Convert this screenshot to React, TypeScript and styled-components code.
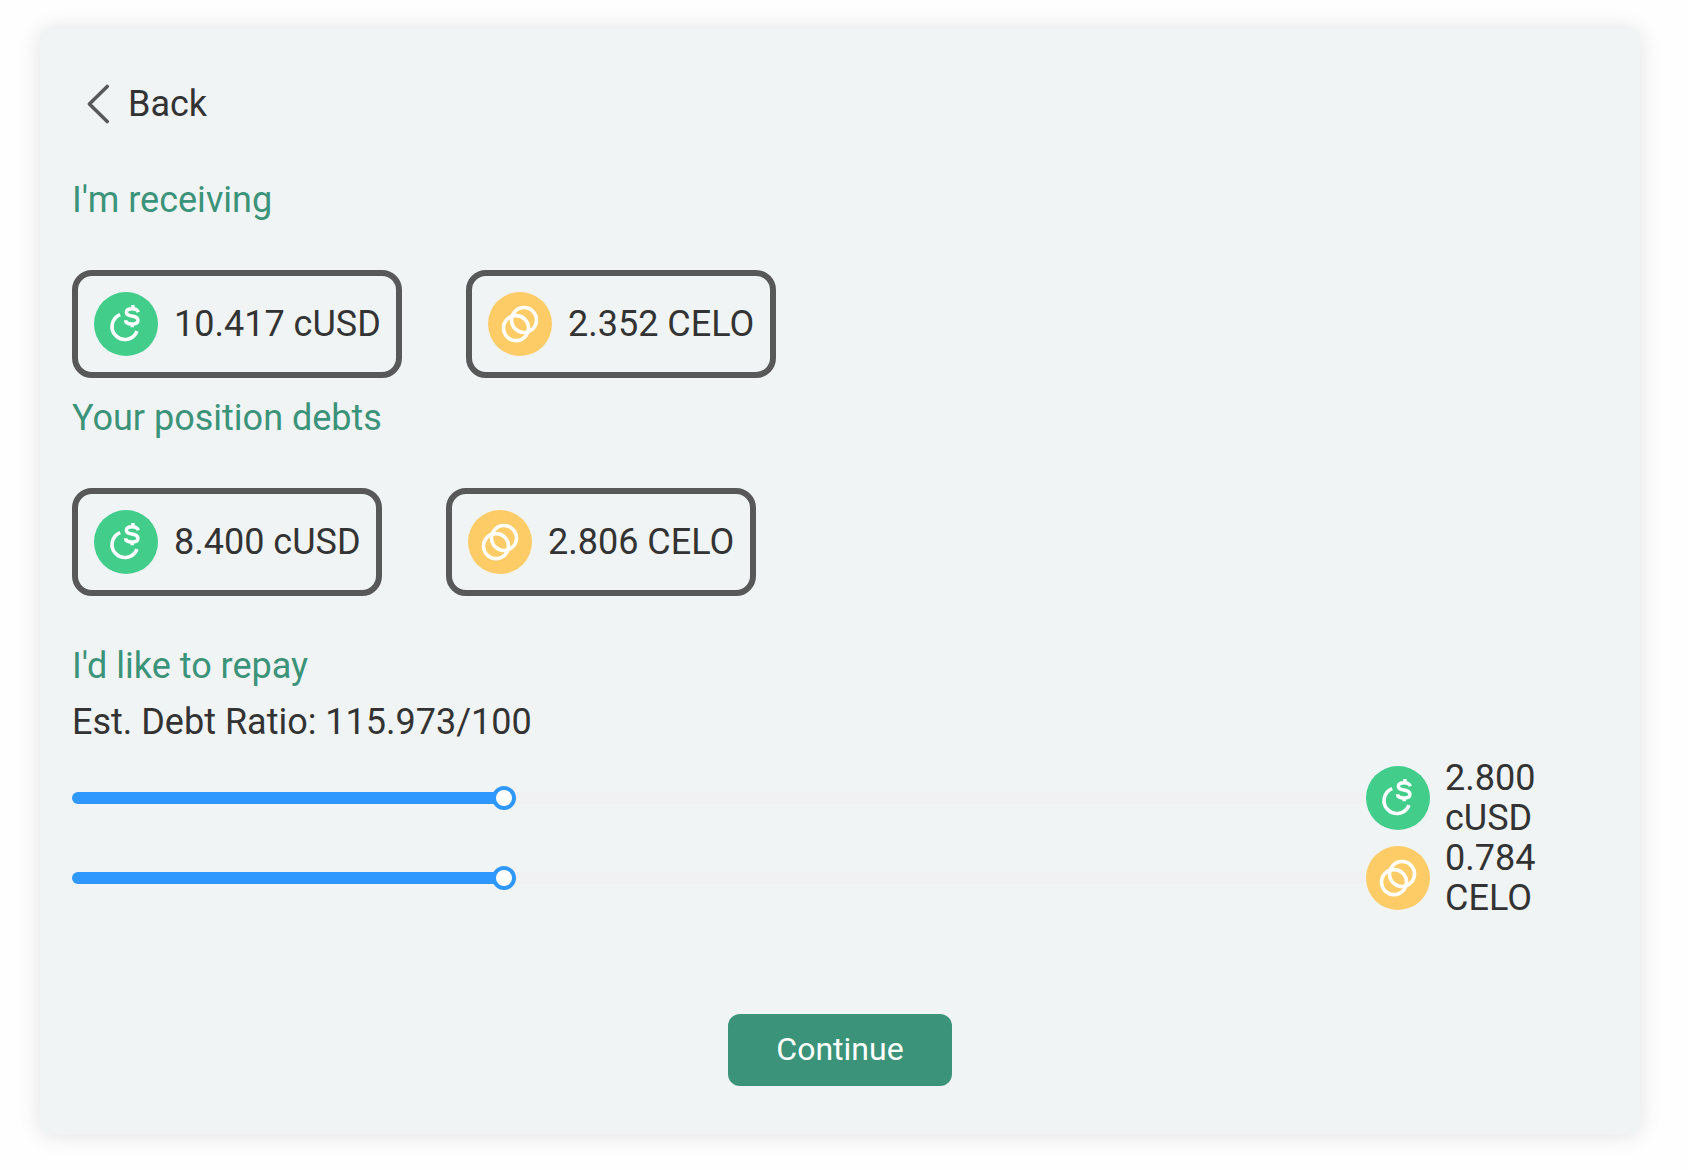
import React from "react";
import styled, { createGlobalStyle } from "styled-components";

const GlobalStyle = createGlobalStyle`
  *, *::before, *::after { box-sizing: border-box; }
  body {
    margin: 0;
    background: #fefefe;
    color: #333333;
    font-family: Roboto, "Liberation Sans", sans-serif;
    font-size: 36px;
    line-height: 40px;
  }
`;

const Page = styled.main`
  padding: 28px 48px 36px 40px;
`;

const Card = styled.section`
  display: flex;
  flex-direction: column;
  width: 1600px;
  height: 1106px;
  padding: 52px 32px 48px;
  border-radius: 12px;
  background: #f0f4f5;
  box-shadow: 0 1px 22px rgba(0, 0, 0, 0.12);
`;

const BackButton = styled.button`
  display: flex;
  align-items: center;
  align-self: flex-start;
  gap: 16px;
  height: 48px;
  margin-bottom: 52px;
  padding: 0 0 0 14px;
  border: 0;
  background: none;
  color: inherit;
  font: inherit;
`;

const Heading = styled.h2<{ $after?: number }>`
  margin: 0 0 ${(p) => p.$after ?? 0}px;
  color: #3b9379;
  font-size: 36px;
  font-weight: 400;
`;

const Balances = styled.div<{ $after: number }>`
  display: flex;
  gap: 64px;
  margin-bottom: ${(p) => p.$after}px;
`;

const BalanceBox = styled.div<{ $width: number }>`
  display: flex;
  align-items: center;
  gap: 16px;
  width: ${(p) => p.$width}px;
  height: 108px;
  padding: 0 16px;
  border: 6px solid #585858;
  border-radius: 20px;
  white-space: nowrap;
`;

const Ratio = styled.p`
  margin: 0 0 16px;
`;

const SliderRow = styled.div`
  display: flex;
  align-items: center;
  height: 80px;
`;

const Track = styled.div`
  display: flex;
  align-items: center;
  width: 1294px;
  height: 12px;
  border-radius: 6px;
  background: #f1f1f3;
`;

const Fill = styled.div`
  flex: none;
  height: 12px;
  border-radius: 6px;
  background: #2f98ff;
`;

const Knob = styled.div`
  flex: none;
  width: 24px;
  height: 24px;
  margin-left: -12px;
  border: 4px solid #2f98ff;
  border-radius: 50%;
  background: #ffffff;
`;

const RepayAmount = styled.div`
  display: flex;
  align-items: center;
  gap: 15px;
  width: 180px;
`;

const ContinueButton = styled.button`
  align-self: center;
  width: 224px;
  height: 72px;
  margin-top: auto;
  padding: 0 0 2px;
  border: 0;
  border-radius: 12px;
  background: #3b9379;
  color: #ffffff;
  font: inherit;
  font-size: 32px;
`;

const TokenSvg = styled.svg`
  display: block;
  flex: none;
  width: 64px;
  height: 64px;
`;

type Token = "cUSD" | "CELO";

function TokenIcon({ token }: { token: Token }) {
  if (token === "cUSD") {
    return (
      <TokenSvg viewBox="0 0 64 64" fill="none" stroke="#fff">
        <circle cx="32" cy="32" r="32" fill="#42cd8a" stroke="none" />
        <path d="M26.2 22.6A12.9 12.9 0 1 0 43 39.2" strokeWidth="3.6" />
        <path
          d="M44.2 20.2C43.6 18 41.4 16.8 38.2 16.8C34.6 16.8 32.4 18.2 32.4 20.5C32.4 26 43.9 21.9 43.9 28.2C43.9 30.7 41.6 32 37.8 32C34.2 32 31.8 30.8 31.5 28.2M38.9 13V17M38.2 32V35.3"
          strokeWidth="3.5"
        />
      </TokenSvg>
    );
  }
  return (
    <TokenSvg viewBox="0 0 64 64" fill="none" stroke="#fff" strokeWidth="3.6">
      <circle cx="32" cy="32" r="32" fill="#fdcc67" stroke="none" />
      <circle cx="28" cy="36.1" r="12.5" />
      <circle cx="36" cy="28" r="12.5" />
    </TokenSvg>
  );
}

function Balance({ token, amount, width }: { token: Token; amount: string; width: number }) {
  return (
    <BalanceBox $width={width}>
      <TokenIcon token={token} />
      <span>{amount} {token}</span>
    </BalanceBox>
  );
}

function RepaySlider({ token, amount, ratio }: { token: Token; amount: string; ratio: number }) {
  return (
    <SliderRow>
      <Track>
        <Fill style={{ width: `${ratio * 100}%` }} />
        <Knob />
      </Track>
      <RepayAmount>
        <TokenIcon token={token} />
        <span>{amount} {token}</span>
      </RepayAmount>
    </SliderRow>
  );
}

export default function App() {
  return (
    <>
      <GlobalStyle />
      <Page>
        <Card>
          <BackButton>
            <svg width="26" height="40" viewBox="0 0 26 40" fill="none">
              <path
                d="M21.2 2.4L3.4 20L21.2 37.6"
                stroke="#585858"
                strokeWidth="3.5"
                strokeLinecap="round"
                strokeLinejoin="round"
              />
            </svg>
            <span>Back</span>
          </BackButton>
          <Heading $after={50}>I'm receiving</Heading>
          <Balances $after={20}>
            <Balance token="cUSD" amount="10.417" width={330} />
            <Balance token="CELO" amount="2.352" width={310} />
          </Balances>
          <Heading $after={50}>Your position debts</Heading>
          <Balances $after={50}>
            <Balance token="cUSD" amount="8.400" width={310} />
            <Balance token="CELO" amount="2.806" width={310} />
          </Balances>
          <Heading $after={16}>I'd like to repay</Heading>
          <Ratio>Est. Debt Ratio: 115.973/100</Ratio>
          <RepaySlider token="cUSD" amount="2.800" ratio={0.3338} />
          <RepaySlider token="CELO" amount="0.784" ratio={0.3338} />
          <ContinueButton>Continue</ContinueButton>
        </Card>
      </Page>
    </>
  );
}
